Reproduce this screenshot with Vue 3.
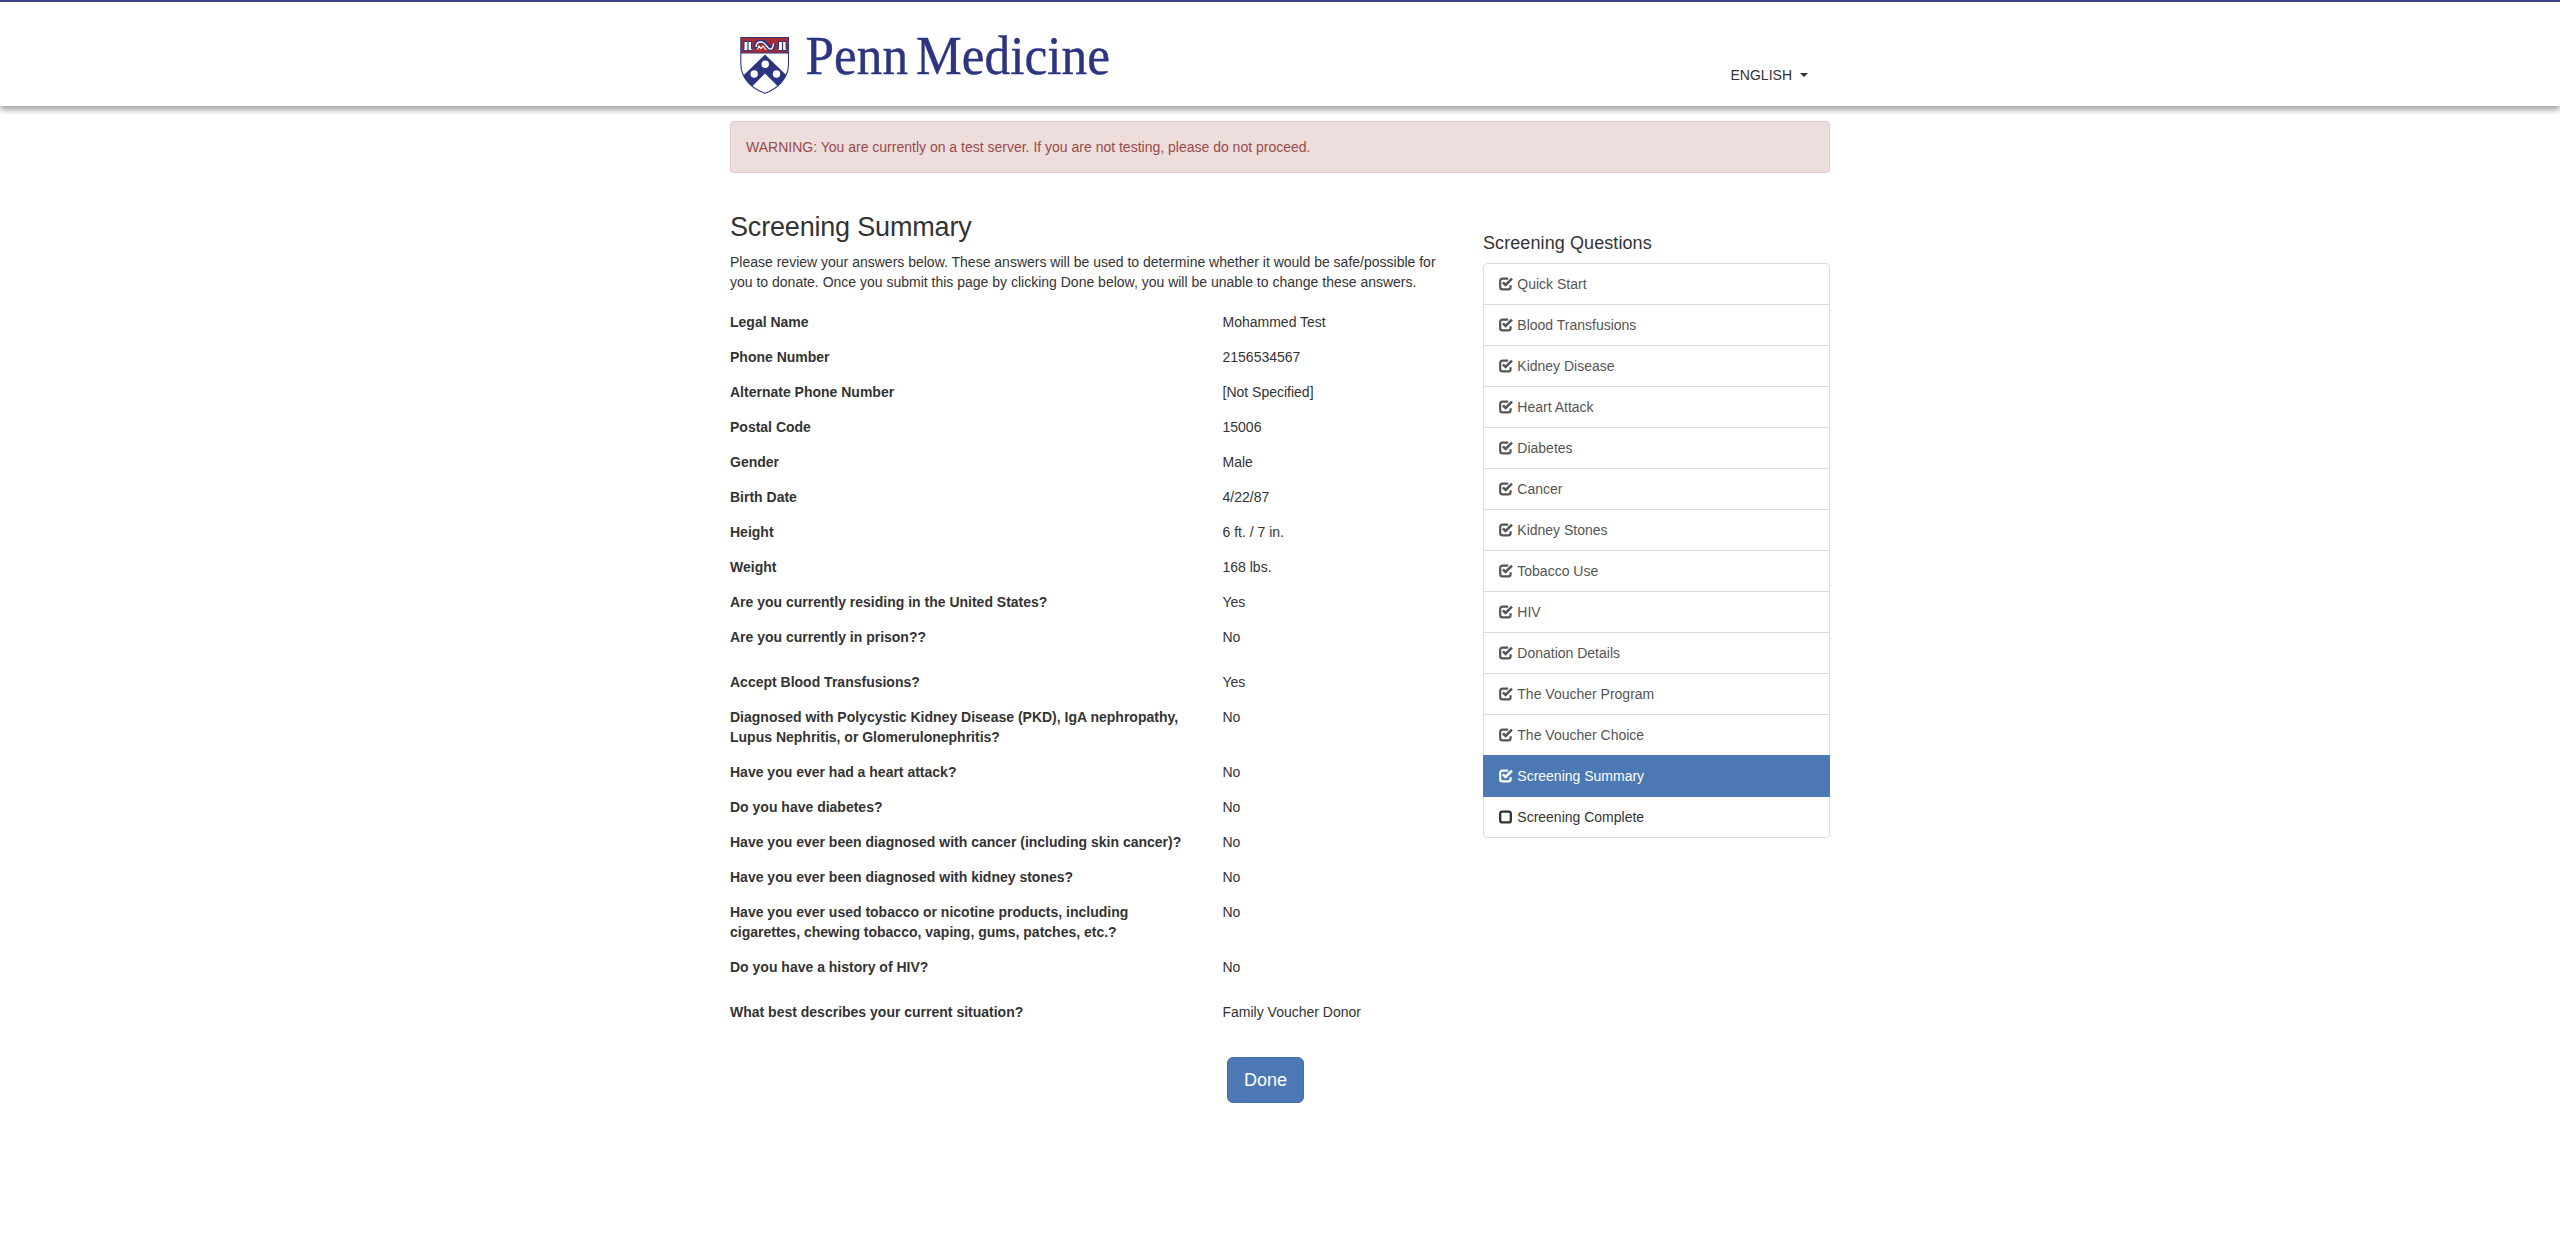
<script setup>
const personal = [
  ['Legal Name', 'Mohammed Test'],
  ['Phone Number', '2156534567'],
  ['Alternate Phone Number', '[Not Specified]'],
  ['Postal Code', '15006'],
  ['Gender', 'Male'],
  ['Birth Date', '4/22/87'],
  ['Height', '6 ft. / 7 in.'],
  ['Weight', '168 lbs.'],
  ['Are you currently residing in the United States?', 'Yes'],
  ['Are you currently in prison??', 'No'],
]
const medical = [
  ['Accept Blood Transfusions?', 'Yes'],
  ['Diagnosed with Polycystic Kidney Disease (PKD), IgA nephropathy, Lupus Nephritis, or Glomerulonephritis?', 'No'],
  ['Have you ever had a heart attack?', 'No'],
  ['Do you have diabetes?', 'No'],
  ['Have you ever been diagnosed with cancer (including skin cancer)?', 'No'],
  ['Have you ever been diagnosed with kidney stones?', 'No'],
  ['Have you ever used tobacco or nicotine products, including cigarettes, chewing tobacco, vaping, gums, patches, etc.?', 'No'],
  ['Do you have a history of HIV?', 'No'],
]
const donation = [['What best describes your current situation?', 'Family Voucher Donor']]
const groups = [personal, medical, donation]

const steps = [
  'Quick Start', 'Blood Transfusions', 'Kidney Disease', 'Heart Attack', 'Diabetes',
  'Cancer', 'Kidney Stones', 'Tobacco Use', 'HIV', 'Donation Details',
  'The Voucher Program', 'The Voucher Choice', 'Screening Summary', 'Screening Complete',
]
const current = 12
</script>

<template>
  <header class="topbar">
    <div class="container bar-inner">
      <svg class="logo" width="400" height="90" viewBox="730 12 400 90" aria-label="Penn Medicine">
        <path d="M740.8 37.5H788.5V64C788.5 78 778 88.5 765 93.3C751.5 88.5 740.8 78 740.8 64Z" fill="#fff" />
        <path d="M741 37.5H788.5V53H741Z" fill="#a92c32" />
        <clipPath id="shield"><path d="M740.8 37.5H788.5V64C788.5 78 778 88.5 765 93.3C751.5 88.5 740.8 78 740.8 64Z" /></clipPath>
        <g clip-path="url(#shield)">
          <path d="M765 54.5L794 82.500L779.500 88L765 73.500L750.500 88L736 82.500Z" fill="#2d3580" />
        </g>
        <g fill="#fff">
          <circle cx="765.2" cy="64.3" r="3.7" />
          <circle cx="754.2" cy="74" r="3.7" />
          <circle cx="776.5" cy="74" r="3.7" />
        </g>
        <g fill="#fff" stroke="#2d3580" stroke-width="1">
          <path d="M744 41.5H747.5L748 42L748.5 41.5H751.5V49H753V50.5H743V49H744Z" />
          <path d="M778.500 41.5H782L782.5 42L783 41.5H786V49H787V50.5H777.5V49H778.5Z" />
        </g>
        <path d="M748 42V50M782.5 42V50" stroke="#2d3580" stroke-width="1.2" />
        <path d="M756 48C754.5 44 757 41.500 761 41.500C766 41.500 767 46 769.5 48.500C771 50 773 49 773.5 44" fill="none" stroke="#2d3580" stroke-width="4.2" />
        <path d="M756 47C756 44 758 42 761 42C765.5 42 766 46.5 769 48.500C771 50 773 49 773.5 43.500" fill="none" stroke="#fff" stroke-width="1.4" />
        <path d="M757.5 49.500L759 46L761 48.500L763 46L766 50" fill="none" stroke="#fff" stroke-width="1.1" />
        <path d="M740.8 53H788.5" stroke="#2d3580" stroke-width="1" />
        <path d="M740.8 37.5H788.5V64C788.5 78 778 88.5 765 93.3C751.5 88.5 740.8 78 740.8 64Z" fill="none" stroke="#2d3580" stroke-width="1.1" />
        <text x="805.5" y="74" class="wordmark" textLength="102.5" lengthAdjust="spacingAndGlyphs">Penn</text>
        <text x="916" y="74" class="wordmark" textLength="194" lengthAdjust="spacingAndGlyphs">Medicine</text>
      </svg>
      <div class="language">ENGLISH <span class="caret"></span></div>
    </div>
  </header>

  <main class="container">
    <div class="alert">WARNING: You are currently on a test server. If you are not testing, please do not proceed.</div>
    <div class="columns">
      <section class="summary">
        <h2>Screening Summary</h2>
        <p>Please review your answers below. These answers will be used to determine whether it would be safe/possible for you to donate. Once you submit this page by clicking Done below, you will be unable to change these answers.</p>
        <dl v-for="(group, g) in groups" :key="g">
          <div v-for="row in group" :key="row[0]" class="row">
            <dt>{{ row[0] }}</dt>
            <dd>{{ row[1] }}</dd>
          </div>
        </dl>
        <button class="done" type="button">Done</button>
      </section>
      <aside>
        <h4>Screening Questions</h4>
        <ul>
          <li v-for="(step, i) in steps" :key="step" :class="{ active: i === current, pending: i > current }">
            <svg class="check" width="14" height="14" viewBox="0 0 14 14">
              <template v-if="i <= current">
                <path d="M9.2 1.6H3.6Q1.2 1.6 1.2 4V10Q1.2 12.4 3.6 12.4H9.2Q11.6 12.4 11.6 10V8.3" fill="none" stroke="currentColor" stroke-width="2.2" />
                <path d="M3.9 5.3L6.6 8L13 1.600" fill="none" stroke="currentColor" stroke-width="2.5" />
              </template>
              <rect v-else x="1.2" y="1.6" width="10.6" height="10.8" rx="2.2" fill="none" stroke="currentColor" stroke-width="2.3" />
            </svg>
            <span>{{ step }}</span>
          </li>
        </ul>
      </aside>
    </div>
  </main>
</template>

<style>
body {
  background: #fff;
}
</style>

<style scoped>
* {
  box-sizing: border-box;
}
.topbar,
main {
  font: 14px/20px "Liberation Sans", Arial, sans-serif;
  color: #333;
}
.container {
  width: 1100px;
  margin: 0 auto;
}
.topbar {
  height: 106px;
  border-top: 2px solid #3e4483;
  background: #fff;
  box-shadow: 0 4px 6px rgba(0, 0, 0, 0.36);
}
.bar-inner {
  display: flex;
  justify-content: space-between;
  padding: 10px 22px 0 0;
}
.logo {
  display: block;
}
.wordmark {
  font: 55.5px "Liberation Serif", serif;
  fill: #2d3580;
  stroke: #2d3580;
  stroke-width: 0.4px;
}
.language {
  display: flex;
  align-items: center;
  height: 20px;
  margin-top: 53px;
}
.caret {
  margin-left: 8px;
  border: 4px solid transparent;
  border-top-color: #333;
  border-bottom: 0;
}
.alert {
  margin-top: 15px;
  padding: 15px;
  border: 1px solid #e4c9cf;
  border-radius: 4px;
  background: #eedddd;
  color: #984b48;
}
.columns {
  display: flex;
  justify-content: space-between;
}
.summary {
  width: 723px;
  padding-top: 39px;
}
h2 {
  margin: 0 0 10px;
  font-size: 27px;
  line-height: 30px;
  font-weight: 400;
  letter-spacing: -0.18px;
}
p {
  margin: 0 0 20px;
}
dl {
  margin: 0;
  padding-bottom: 10px;
}
.row {
  display: flex;
  padding-bottom: 15px;
}
dt {
  width: 462px;
  margin-right: 30.5px;
  font-weight: 700;
}
dd {
  margin: 0;
}
.done {
  display: block;
  width: 77px;
  height: 46px;
  margin: 10px 0 0 497px;
  padding: 0;
  border: 1px solid #456fa8;
  border-radius: 6px;
  background: #4c78b4;
  color: #fff;
  font: 18px/24px "Liberation Sans", Arial, sans-serif;
}
aside {
  width: 347px;
  padding-top: 60px;
}
h4 {
  margin: 0 0 10px;
  font-size: 18px;
  line-height: 20px;
  font-weight: 400;
  letter-spacing: 0.09px;
}
ul {
  margin: 0;
  padding: 0;
  list-style: none;
}
li {
  display: flex;
  align-items: center;
  height: 42px;
  margin-bottom: -1px;
  padding: 0 15px;
  border: 1px solid #ddd;
  color: #555;
}
li:first-child {
  border-radius: 4px 4px 0 0;
}
li:last-child {
  border-radius: 0 0 4px 4px;
}
.check {
  margin-right: 4.3px;
}
.active {
  position: relative;
  border-color: #4c78b4;
  background: #4c78b4;
  color: #fff;
}
.pending {
  color: #333;
}
</style>
